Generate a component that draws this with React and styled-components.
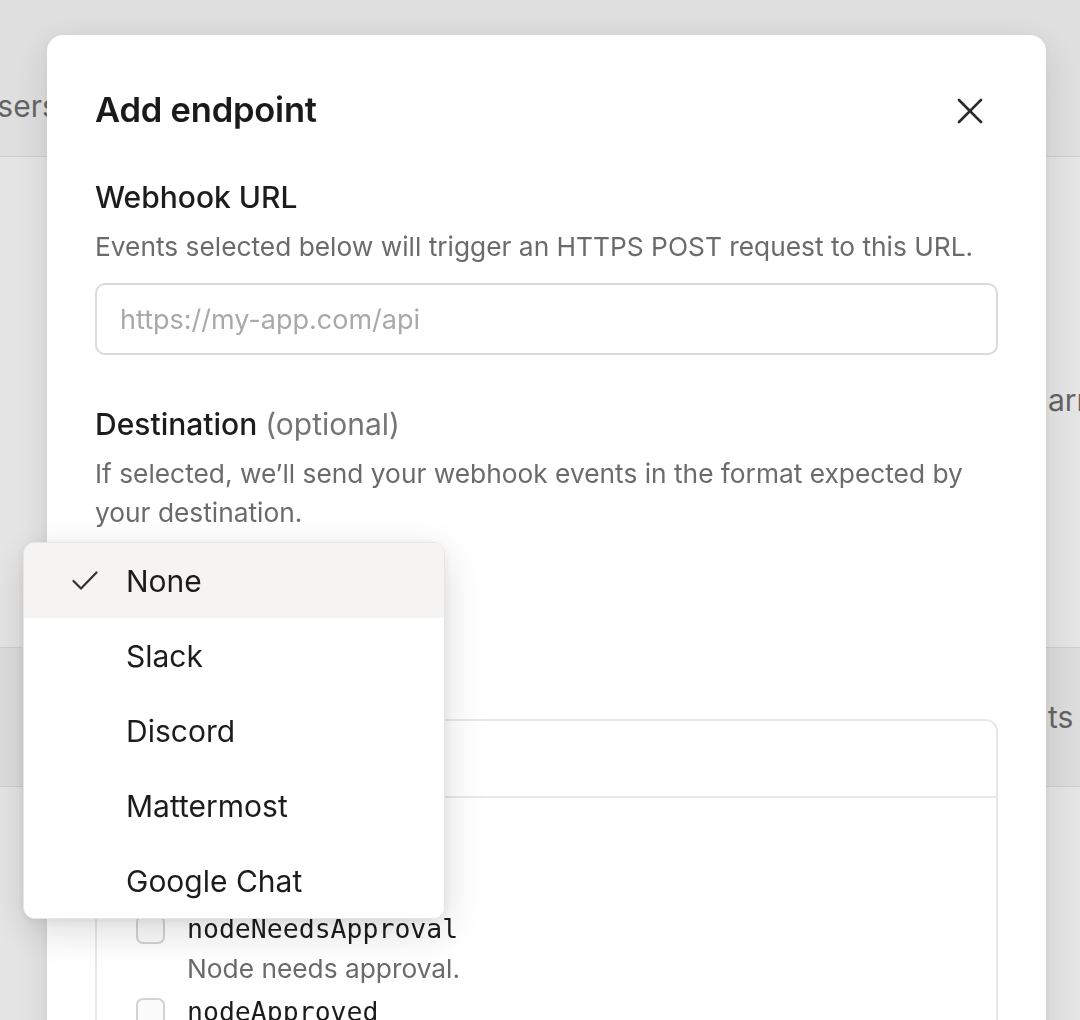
import React from "react";
import styled, { createGlobalStyle } from "styled-components";

const GlobalStyle = createGlobalStyle`
  html, body {
    margin: 0;
    padding: 0;
    height: 100%;
    overflow: hidden;
    background: #ffffff;
    font-family: Inter, "Noto Sans", "Liberation Sans", sans-serif;
    color: #1c1c1c;
  }
  * { box-sizing: border-box; }
`;

/* ---------- page behind the dialog ---------- */

const Page = styled.div`
  display: flex;
  flex-direction: column;
  height: 1020px;
  background: #ffffff;
`;

const TopBar = styled.header`
  height: 157px;
  display: flex;
  align-items: flex-start;
  padding-top: 88px;
  background: #f9f9f9;
  border-bottom: 1px solid #e4e4e4;
`;

const Tab = styled.span`
  margin-left: -25px;
  font-size: 30px;
  color: #707070;
`;

const Content = styled.main`
  display: flex;
  flex-direction: column;
  padding-top: 213px;
`;

const ContentRow = styled.div`
  display: grid;
  grid-template-columns: 1048px 1fr;
  align-items: center;
  height: ${(p) => p.$h}px;
  margin-bottom: ${(p) => p.$mb || 0}px;
  background: ${(p) => (p.$band ? "#f6f6f6" : "transparent")};
  border-top: ${(p) => (p.$band ? "1px solid #e6e6e6" : "none")};
  border-bottom: ${(p) => (p.$band ? "1px solid #e6e6e6" : "none")};
  font-size: 30px;
  color: #707070;
  white-space: nowrap;
  overflow: hidden;
`;

/* ---------- dialog ---------- */

const Overlay = styled.div`
  position: fixed;
  inset: 0;
  background: rgba(0, 0, 0, 0.1);
  padding: 35px 0 0 47px;
`;

const Dialog = styled.section`
  width: 999px;
  min-height: 1100px;
  background: #ffffff;
  border-radius: 16px;
  padding: 48px 48px 0 48px;
  box-shadow: 0 10px 40px rgba(0, 0, 0, 0.12), 0 2px 8px rgba(0, 0, 0, 0.05);
  display: flex;
  flex-direction: column;
`;

const DialogHeader = styled.div`
  display: flex;
  align-items: center;
  justify-content: space-between;
  height: 52px;
`;

const Title = styled.h2`
  margin: 0;
  font-size: 34.5px;
  font-weight: 600;
  letter-spacing: -0.2px;
  color: #1a1a1a;
`;

const CloseButton = styled.button`
  display: flex;
  align-items: center;
  justify-content: center;
  width: 36px;
  height: 36px;
  margin: 4px 10px 0 0;
  padding: 0;
  border: none;
  background: none;
  color: #2a2a2a;
  cursor: pointer;
`;

const Field = styled.div`
  display: flex;
  flex-direction: column;
  margin-top: ${(p) => p.$mt}px;
`;

const Label = styled.label`
  font-size: 30px;
  line-height: 36px;
  font-weight: 500;
  color: #1c1c1c;
`;

const Optional = styled.span`
  font-weight: 400;
  color: #757575;
`;

const Hint = styled.p`
  margin: ${(p) => p.$mt}px 0 0 0;
  font-size: 26.3px;
  line-height: 39px;
  color: #6b6b6b;
`;

const Input = styled.input`
  margin-top: 17px;
  height: 72px;
  width: 100%;
  padding: 0 23px;
  border: 2px solid #dadada;
  border-radius: 10px;
  font-family: inherit;
  font-size: 27px;
  color: #1c1c1c;
  outline: none;

  &::placeholder {
    color: #a9a9a9;
  }
`;

const SelectTrigger = styled.button`
  margin-top: 12px;
  width: 320px;
  height: 72px;
  display: flex;
  align-items: center;
  padding: 0 23px;
  border: 2px solid #dadada;
  border-radius: 10px;
  background: #fff;
  font-family: inherit;
  font-size: 26px;
  color: #1c1c1c;
`;

const EventsBox = styled.div`
  margin-top: 37px;
  border: 2px solid #e8e8e8;
  border-radius: 12px;
  display: flex;
  flex-direction: column;
`;

const BoxHeader = styled.div`
  height: 77px;
  display: flex;
  align-items: center;
  gap: 20px;
  padding-left: 39px;
  border-bottom: 2px solid #e8e8e8;
  font-size: 28px;
  color: #1c1c1c;
`;

const EventList = styled.div`
  display: flex;
  flex-direction: column;
  padding: 30px 0 0 39px;
  gap: 3px;
`;

const EventRow = styled.div`
  display: grid;
  grid-template-columns: 29px 1fr;
  column-gap: 22px;
  align-items: start;
`;

const Checkbox = styled.span`
  width: 29px;
  height: 29px;
  margin-top: 4px;
  border: 2px solid #d3d3d3;
  border-radius: 7px;
  background: #fbfbfb;
`;

const EventText = styled.div`
  display: flex;
  flex-direction: column;
`;

const EventName = styled.code`
  font-family: "DejaVu Sans Mono", "Liberation Mono", monospace;
  font-size: 26.5px;
  line-height: 36px;
  color: #1c1c1c;
`;

const EventDesc = styled.span`
  font-size: 26.3px;
  line-height: 44px;
  color: #6b6b6b;
`;

/* ---------- dropdown ---------- */

const Menu = styled.ul`
  position: absolute;
  left: 23px;
  top: 542px;
  width: 422px;
  margin: 0;
  padding: 0;
  list-style: none;
  background: #ffffff;
  border: 1px solid #e6e6e6;
  border-radius: 12px;
  overflow: hidden;
  box-shadow: 0 12px 40px rgba(0, 0, 0, 0.14), 0 2px 10px rgba(0, 0, 0, 0.06);
`;

const MenuItem = styled.li`
  height: 75px;
  display: grid;
  grid-template-columns: 78px 1fr;
  column-gap: 24px;
  align-items: center;
  background: ${(p) => (p.$active ? "#f5f4f2" : "#ffffff")};
  font-size: 30px;
  color: #1c1c1c;
`;

const CheckSlot = styled.span`
  display: flex;
  justify-content: flex-end;
  padding-right: 4px;
  color: #333333;
`;

const destinations = ["None", "Slack", "Discord", "Mattermost", "Google Chat"];

const events = [
  { name: "nodeCreated", desc: "Node was created." },
  { name: "nodeNeedsApproval", desc: "Node needs approval." },
  { name: "nodeApproved", desc: "Node was approved." },
];

function CloseIcon() {
  return (
    <svg width="26" height="26" viewBox="0 0 26 26" fill="none">
      <path d="M2 2 L24 24 M24 2 L2 24" stroke="currentColor" strokeWidth="2.6" strokeLinecap="round" />
    </svg>
  );
}

function CheckIcon() {
  return (
    <svg width="26" height="20" viewBox="0 0 26 20" fill="none">
      <path d="M1.5 10 L9 17.5 L24.5 1.5" stroke="currentColor" strokeWidth="2.2" strokeLinecap="round" strokeLinejoin="round" />
    </svg>
  );
}

export default function App() {
  return (
    <>
      <GlobalStyle />
      <Page>
        <TopBar>
          <Tab>Users</Tab>
        </TopBar>
        <Content>
          <ContentRow $h={60} $mb={217}>
            <span />
            <span>arrange</span>
          </ContentRow>
          <ContentRow $h={140} $band>
            <span />
            <span>ts</span>
          </ContentRow>
        </Content>
      </Page>

      <Overlay>
        <Dialog>
          <DialogHeader>
            <Title>Add endpoint</Title>
            <CloseButton aria-label="Close">
              <CloseIcon />
            </CloseButton>
          </DialogHeader>

          <Field $mt={44}>
            <Label>Webhook URL</Label>
            <Hint $mt={12}>Events selected below will trigger an HTTPS POST request to this URL.</Hint>
            <Input placeholder="https://my-app.com/api" />
          </Field>

          <Field $mt={51}>
            <Label>
              Destination <Optional>(optional)</Optional>
            </Label>
            <Hint $mt={12}>
              If selected, we’ll send your webhook events in the format expected by your destination.
            </Hint>
            <SelectTrigger>None</SelectTrigger>
          </Field>

          <Field $mt={30}>
            <Label>Events</Label>
            <EventsBox>
              <BoxHeader>
                <Checkbox />
                <span>Select every event</span>
              </BoxHeader>
              <EventList>
                {events.map((e) => (
                  <EventRow key={e.name}>
                    <Checkbox />
                    <EventText>
                      <EventName>{e.name}</EventName>
                      <EventDesc>{e.desc}</EventDesc>
                    </EventText>
                  </EventRow>
                ))}
              </EventList>
            </EventsBox>
          </Field>
        </Dialog>

        <Menu role="listbox">
          {destinations.map((d, i) => (
            <MenuItem key={d} $active={i === 0}>
              <CheckSlot>{i === 0 ? <CheckIcon /> : null}</CheckSlot>
              <span>{d}</span>
            </MenuItem>
          ))}
        </Menu>
      </Overlay>
    </>
  );
}
